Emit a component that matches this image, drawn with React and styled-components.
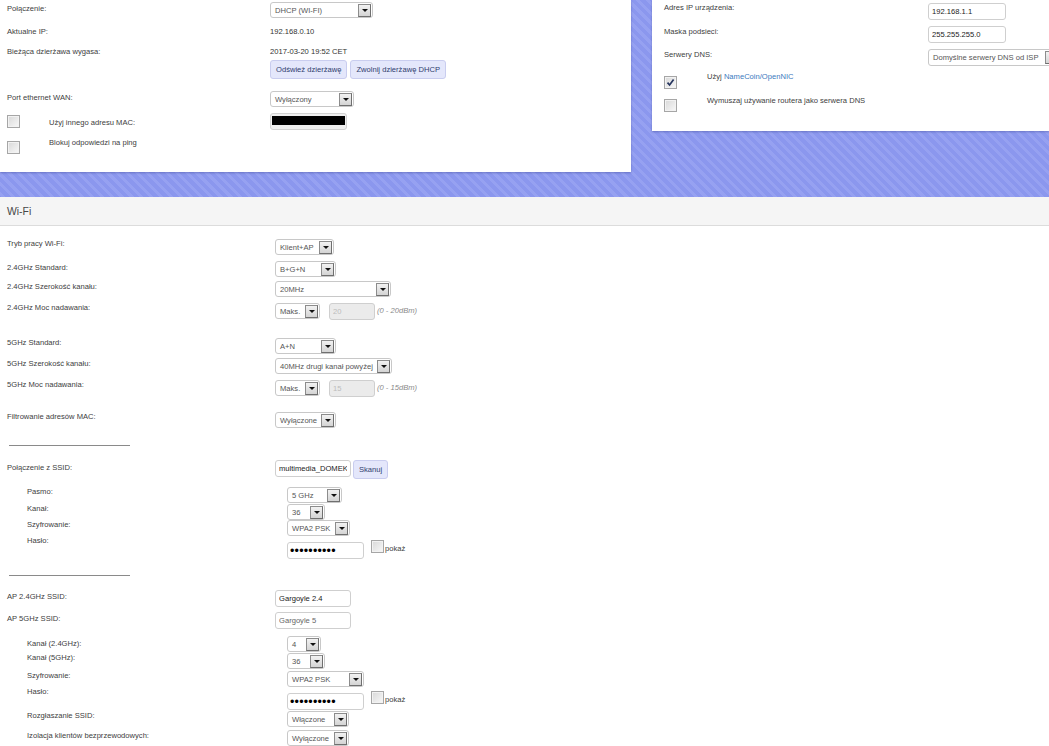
import React from 'react';
import styled, { createGlobalStyle } from 'styled-components';

const GlobalStyle = createGlobalStyle`
  html, body {
    margin: 0;
    padding: 0;
  }
  body {
    width: 1049px;
    height: 746px;
    overflow: hidden;
    font-family: "Liberation Sans", Arial, sans-serif;
    font-size: 7.6px;
    color: #404040;
    background-color: #8c98ee;
    background-image: repeating-linear-gradient(45deg, #8b97ee 0 4px, #96a1f1 4px 7px);
  }
`;

const Page = styled.div`
  width: 1049px;
  height: 746px;
  overflow: hidden;
`;

const TopRow = styled.div`
  display: flex;
  align-items: flex-start;
  gap: 21px;
  height: 197px;
`;

const Card = styled.div`
  background: #fff;
  box-shadow: 0 1px 2px rgba(40, 50, 120, 0.35);
  height: ${p => p.$h}px;
  width: ${p => (p.$w ? `${p.$w}px` : 'auto')};
  flex: ${p => (p.$w ? '0 0 auto' : '1 1 0')};
  padding-left: ${p => p.$pl}px;
  box-sizing: border-box;
  overflow: hidden;
`;

const Section = styled.div`
  background: #fff;
  height: 549px;
`;

const SectionHeader = styled.div`
  height: 28px;
  line-height: 29px;
  padding-left: 7px;
  background: #f5f5f5;
  border-bottom: 1px solid #dcdcdc;
  font-size: 10.4px;
  color: #474747;
`;

const Row = styled.div`
  display: flex;
  align-items: flex-start;
  margin-top: ${p => p.$mt || 0}px;
  padding-left: ${p => p.$pl || 0}px;
`;

const Label = styled.div`
  width: ${p => p.$w}px;
  flex-shrink: 0;
  line-height: 10px;
  padding-top: ${p => p.$pt || 0}px;
  white-space: nowrap;
`;

const Value = styled.div`
  line-height: 10px;
  color: #333;
`;

const CheckCell = styled.div`
  width: ${p => p.$w}px;
  flex-shrink: 0;
  padding-top: ${p => p.$pt || 0}px;
`;

const Controls = styled.div`
  display: flex;
  align-items: flex-start;
  gap: ${p => p.$gap || 0}px;
`;

const SelectBox = styled.div`
  width: ${p => p.$w}px;
  height: ${p => p.$h || 16}px;
  box-sizing: border-box;
  border: 1px solid #c8c8c8;
  border-radius: 3px;
  background: #fff;
  display: flex;
  align-items: center;
  justify-content: space-between;
  padding: 0 1px 0 4px;
  color: #555;
  white-space: nowrap;
  flex-shrink: 0;
`;

const ArrowBox = styled.span`
  width: 13px;
  height: 13px;
  box-sizing: border-box;
  border: 1px solid #8c8c8c;
  border-right-color: #6f6f6f;
  border-bottom-color: #6f6f6f;
  background: linear-gradient(#f2f2f2, #d4d4d4);
  display: flex;
  align-items: center;
  justify-content: center;
  flex-shrink: 0;

  &::after {
    content: "";
    border-left: 3px solid transparent;
    border-right: 3px solid transparent;
    border-top: 3px solid #111;
    margin-top: 1px;
  }
`;

const TextInput = styled.input`
  width: ${p => p.$w}px;
  height: 17px;
  box-sizing: border-box;
  border: 1px solid #cfcfcf;
  border-radius: 3px;
  padding: 0 3px;
  margin: 0;
  margin-top: ${p => p.$mt || 0}px;
  font: inherit;
  color: ${p => (p.$muted ? '#666' : '#1a1a1a')};
  background: #fff;
  outline: none;

  &:disabled {
    background: #ebebeb;
    color: #bcbcbc;
  }
`;

const PasswordInput = styled(TextInput)`
  font-size: 12.5px;
  letter-spacing: 0.2px;
  padding: 0 2px;
  color: #000;
`;

const RedactedBox = styled.div`
  width: 77px;
  height: 17px;
  box-sizing: border-box;
  border: 1px solid #d2d2d2;
  border-radius: 3px;
  background: #efefef;
  padding: 2px 1px 0;
`;

const Redacted = styled.div`
  height: 9px;
  background: #000;
`;

const Button = styled.button`
  height: 19px;
  padding: 0 5px;
  margin: 0;
  border: 1px solid #c9cdef;
  border-radius: 3px;
  background: #e4e7fb;
  color: #2f3d6e;
  font: inherit;
  white-space: nowrap;
`;

const Hint = styled.span`
  font-style: italic;
  color: #8a8a8a;
  line-height: 16px;
  margin-left: -7px;
`;

const Box = styled.span`
  display: flex;
  align-items: center;
  justify-content: center;
  width: 13px;
  height: 13px;
  box-sizing: border-box;
  border: 1px solid #a6a6a6;
  background: linear-gradient(135deg, #d8d8d8, #f8f8f8);
  box-shadow: inset 0 0 0 1px #f2f2f2;
  margin-top: ${p => p.$mt || 0}px;
  flex-shrink: 0;
`;

const ShowToggle = styled.div`
  display: flex;
  align-items: flex-end;
  margin-top: ${p => p.$mt || 0}px;
  margin-left: 7px;
`;

const ShowText = styled.span`
  line-height: 9px;
  margin-left: 1px;
`;

const Link = styled.a`
  color: #3b79be;
  text-decoration: none;
`;

const Divider = styled.div`
  width: 121px;
  height: 1px;
  margin-left: 9px;
  margin-top: ${p => p.$mt}px;
  background: #8a8a8a;
`;

const Select = ({ w, h, children }) => (
  <SelectBox $w={w} $h={h}>
    <span>{children}</span>
    <ArrowBox />
  </SelectBox>
);

const Checkbox = ({ checked, mt }) => (
  <Box $mt={mt}>
    {checked && (
      <svg width="9" height="9" viewBox="0 0 9 9">
        <path d="M1.5 4.6 L3.6 7 L7.6 1.4" fill="none" stroke="#26355f" strokeWidth="1.7" />
      </svg>
    )}
  </Box>
);

const Show = ({ mt }) => (
  <ShowToggle $mt={mt}>
    <Checkbox />
    <ShowText>pokaż</ShowText>
  </ShowToggle>
);

// main Wi-Fi rows put the control at x=275
const Field = ({ label, mt, pt, children }) => (
  <Row $mt={mt} $pl={7}>
    <Label $w={268} $pt={pt}>{label}</Label>
    <Controls $gap={9}>{children}</Controls>
  </Row>
);

// nested rows are indented and put the control at x=287
const SubField = ({ label, mt, pt, children }) => (
  <Row $mt={mt} $pl={27}>
    <Label $w={260} $pt={pt}>{label}</Label>
    <Controls>{children}</Controls>
  </Row>
);

const WanCard = () => (
  <Card $w={631} $h={172} $pl={7}>
    <Row $mt={2}>
      <Label $w={263} $pt={2}>Połączenie:</Label>
      <Select w={103}>DHCP (WI-FI)</Select>
    </Row>
    <Row $mt={9}>
      <Label $w={263}>Aktualne IP:</Label>
      <Value>192.168.0.10</Value>
    </Row>
    <Row $mt={10}>
      <Label $w={263}>Bieżąca dzierżawa wygasa:</Label>
      <Value>2017-03-20 19:52 CET</Value>
    </Row>
    <Row $mt={3}>
      <Label $w={263} />
      <Controls $gap={3}>
        <Button>Odśwież dzierżawę</Button>
        <Button>Zwolnij dzierżawę DHCP</Button>
      </Controls>
    </Row>
    <Row $mt={12}>
      <Label $w={263} $pt={2}>Port ethernet WAN:</Label>
      <Select w={84}>Wyłączony</Select>
    </Row>
    <Row $mt={6}>
      <CheckCell $w={42} $pt={2}><Checkbox /></CheckCell>
      <Label $w={221} $pt={5}>Użyj innego adresu MAC:</Label>
      <RedactedBox><Redacted /></RedactedBox>
    </Row>
    <Row $mt={8}>
      <CheckCell $w={42} $pt={3}><Checkbox /></CheckCell>
      <Label $w={221}>Blokuj odpowiedzi na ping</Label>
    </Row>
  </Card>
);

const LanCard = () => (
  <Card $h={131} $pl={12}>
    <Row $mt={3}>
      <Label $w={264} $pt={0}>Adres IP urządzenia:</Label>
      <TextInput $w={78} defaultValue="192.168.1.1" />
    </Row>
    <Row $mt={6}>
      <Label $w={264} $pt={1}>Maska podsieci:</Label>
      <TextInput $w={78} defaultValue="255.255.255.0" />
    </Row>
    <Row $mt={6}>
      <Label $w={264} $pt={1}>Serwery DNS:</Label>
      <Select w={132} h={17}>Domyślne serwery DNS od ISP</Select>
    </Row>
    <Row $mt={6}>
      <CheckCell $w={43} $pt={4}><Checkbox checked /></CheckCell>
      <Label $w={221}>Użyj <Link>NameCoin/OpenNIC</Link></Label>
    </Row>
    <Row $mt={7}>
      <CheckCell $w={43} $pt={3}><Checkbox /></CheckCell>
      <Label $w={221}>Wymuszaj używanie routera jako serwera DNS</Label>
    </Row>
  </Card>
);

const WifiSection = () => (
  <Section>
    <SectionHeader>Wi-Fi</SectionHeader>

    <Field label="Tryb pracy Wi-Fi:" mt={13}>
      <Select w={59}>Klient+AP</Select>
    </Field>
    <Field label="2.4GHz Standard:" mt={6} pt={2}>
      <Select w={61}>B+G+N</Select>
    </Field>
    <Field label="2.4GHz Szerokość kanału:" mt={4} pt={1}>
      <Select w={116}>20MHz</Select>
    </Field>
    <Field label="2.4GHz Moc nadawania:" mt={6}>
      <Select w={45}>Maks.</Select>
      <TextInput $w={46} defaultValue="20" disabled />
      <Hint>(0 - 20dBm)</Hint>
    </Field>

    <Field label="5GHz Standard:" mt={18}>
      <Select w={61}>A+N</Select>
    </Field>
    <Field label="5GHz Szerokość kanału:" mt={4} pt={1}>
      <Select w={117}>40MHz drugi kanał powyżej</Select>
    </Field>
    <Field label="5GHz Moc nadawania:" mt={6}>
      <Select w={45}>Maks.</Select>
      <TextInput $w={46} defaultValue="15" disabled />
      <Hint>(0 - 15dBm)</Hint>
    </Field>

    <Field label="Filtrowanie adresów MAC:" mt={15}>
      <Select w={61}>Wyłączone</Select>
    </Field>

    <Divider $mt={17} />

    <Row $mt={14} $pl={7}>
      <Label $w={268} $pt={3}>Połączenie z SSID:</Label>
      <Controls $gap={2}>
        <TextInput $w={76} defaultValue="multimedia_DOMEK" />
        <Button>Skanuj</Button>
      </Controls>
    </Row>
    <SubField label="Pasmo:" mt={8}>
      <Select w={55}>5 GHz</Select>
    </SubField>
    <SubField label="Kanał:" mt={1}>
      <Select w={38}>36</Select>
    </SubField>
    <SubField label="Szyfrowanie:" mt={0}>
      <Select w={63}>WPA2 PSK</Select>
    </SubField>
    <SubField label="Hasło:" mt={0}>
      <PasswordInput type="password" $w={77} $mt={6} defaultValue="abcdefghij" readOnly />
      <Show mt={4} />
    </SubField>

    <Divider $mt={16} />

    <Field label="AP 2.4GHz SSID:" mt={14} pt={2}>
      <TextInput $w={76} defaultValue="Gargoyle 2.4" />
    </Field>
    <Field label="AP 5GHz SSID:" mt={5} pt={2}>
      <TextInput $w={76} $muted defaultValue="Gargoyle 5" />
    </Field>
    <SubField label="Kanał (2.4GHz):" mt={7} pt={3}>
      <Select w={34}>4</Select>
    </SubField>
    <SubField label="Kanał (5GHz):" mt={1}>
      <Select w={38}>36</Select>
    </SubField>
    <SubField label="Szyfrowanie:" mt={2}>
      <Select w={77}>WPA2 PSK</Select>
    </SubField>
    <SubField label="Hasło:" mt={0}>
      <PasswordInput type="password" $w={77} $mt={6} defaultValue="abcdefghij" readOnly />
      <Show mt={4} />
    </SubField>
    <SubField label="Rozgłaszanie SSID:" mt={1}>
      <Select w={62}>Włączone</Select>
    </SubField>
    <SubField label="Izolacja klientów bezprzewodowych:" mt={3} pt={1}>
      <Select w={62}>Wyłączone</Select>
    </SubField>
  </Section>
);

export default function App() {
  return (
    <Page>
      <GlobalStyle />
      <TopRow>
        <WanCard />
        <LanCard />
      </TopRow>
      <WifiSection />
    </Page>
  );
}
